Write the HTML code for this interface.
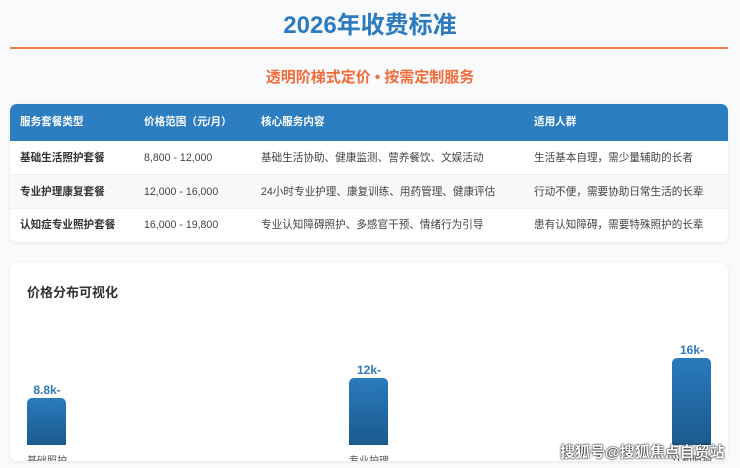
<!DOCTYPE html>
<html><head><meta charset="utf-8"><style>
*{margin:0;padding:0;box-sizing:border-box}
body{width:740px;height:468px;background:#f9fafb;font-family:"Liberation Sans","Noto Sans CJK SC",sans-serif;position:relative;overflow:hidden;color:#333}
.t{position:absolute;top:5px;left:0;width:740px;text-align:center;font-size:24px;font-weight:bold;color:#2c7bbf}
.line{position:absolute;top:47px;left:10px;width:718px;height:2px;background:#f07a4a}
.sub{position:absolute;top:66px;left:0;width:740px;text-align:center;font-size:15px;font-weight:bold;color:#f26b3a}
.card{position:absolute;left:10px;width:718px;background:#fff;border-radius:7px;box-shadow:0 1px 4px rgba(0,0,0,.08);overflow:hidden}
.row{position:absolute;left:0;width:718px;height:34px;font-size:10.6px;color:#444}
.row span{position:absolute;top:0;line-height:34px}
.hd{background:#2d7dc1;color:#fff;font-weight:bold;height:37px;top:0}
.hd span{line-height:37px}
.c1{left:10px}.c2{left:134px}.c3{left:251px}.c4{left:524px}
.b{font-weight:bold;color:#333}
.bar{position:absolute;width:39px;bottom:16px;border-radius:5px 5px 0 0;background:linear-gradient(#2a7abd,#1a5a8e)}
.bar i{position:absolute;top:4px;left:8px;font-style:normal;font-size:11px;font-weight:bold;color:#2f77b5}
.lab{position:absolute;font-size:12px;font-weight:bold;color:#2f78bd;width:60px;text-align:center}
.cat{position:absolute;top:189px;font-size:10px;color:#555}
</style></head><body>
<div class="t">2026年收费标准</div>
<div class="line"></div>
<div class="sub">透明阶梯式定价 • 按需定制服务</div>
<div class="card" style="top:104px;height:138px">
<div class="row hd"><span class="c1">服务套餐类型</span><span class="c2">价格范围（元/月）</span><span class="c3">核心服务内容</span><span class="c4">适用人群</span></div>
<div class="row" style="top:37px;border-bottom:1px solid #eef0f3"><span class="c1 b">基础生活照护套餐</span><span class="c2">8,800 - 12,000</span><span class="c3">基础生活协助、健康监测、营养餐饮、文娱活动</span><span class="c4">生活基本自理，需少量辅助的长者</span></div>
<div class="row" style="top:71px;background:#f7f9fb;border-bottom:1px solid #eef0f3"><span class="c1 b">专业护理康复套餐</span><span class="c2">12,000 - 16,000</span><span class="c3">24小时专业护理、康复训练、用药管理、健康评估</span><span class="c4">行动不便，需要协助日常生活的长辈</span></div>
<div class="row" style="top:104px"><span class="c1 b">认知症专业照护套餐</span><span class="c2">16,000 - 19,800</span><span class="c3">专业认知障碍照护、多感官干预、情绪行为引导</span><span class="c4">患有认知障碍，需要特殊照护的长辈</span></div>
</div>
<div class="card" style="top:263px;height:198px">
<div style="position:absolute;left:17px;top:19px;font-size:13px;font-weight:bold;color:#333">价格分布可视化</div>
<div class="lab" style="left:7px;top:120px">8.8k-</div>
<div class="bar" style="left:17px;top:135px"><i>12k</i></div>
<div class="lab" style="left:329px;top:100px">12k-</div>
<div class="bar" style="left:339px;top:115px"><i>16k</i></div>
<div class="lab" style="left:652px;top:80px">16k-</div>
<div class="bar" style="left:662px;top:95px"><i>19.8k</i></div>
<div class="cat" style="left:17px">基础照护</div>
<div class="cat" style="left:339px">专业护理</div>
<div class="cat" style="left:662px">认知照护</div>
</div>
<div style="position:absolute;left:560px;top:441px;font-size:15px;font-weight:bold;color:#fff;text-shadow:0 0 2px #000,0 0 1px #000">搜狐号@搜狐焦点自贸站</div>
</body></html>
